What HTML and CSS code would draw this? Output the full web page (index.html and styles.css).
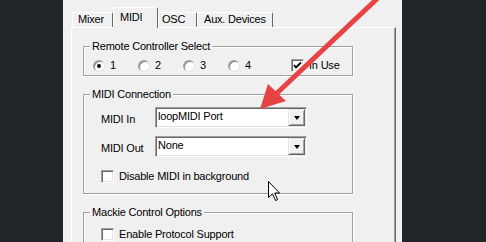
FILE: index.html
```html
<!DOCTYPE html>
<html lang="en">
<head>
    <meta charset="UTF-8">
    <meta name="viewport" content="width=device-width, initial-scale=1.0">
    <title>MIDI Settings</title>
    <link rel="stylesheet" href="styles.css">
</head>
<body>

    <div class="window">
        <div class="tabs">
            <div class="tab tab-mixer">Mixer</div>
            <div class="tab tab-active">MIDI</div>
            <div class="tab tab-osc">OSC</div>
            <div class="tab tab-aux">Aux. Devices</div>
        </div>

        <div class="panel">
            <fieldset class="group">
                <legend>Remote Controller Select</legend>
                <div class="group-body radio-row">
                    <label class="radio"><span class="circle checked"></span>1</label>
                    <label class="radio"><span class="circle"></span>2</label>
                    <label class="radio"><span class="circle"></span>3</label>
                    <label class="radio"><span class="circle"></span>4</label>
                    <label class="check in-use">
                        <span class="box">
                            <svg width="9" height="9" viewBox="0 0 9 9"><path d="M1 4 L3 6.5 L8 1.5" fill="none" stroke="#000" stroke-width="1.8"/></svg>
                        </span>In Use
                    </label>
                </div>
            </fieldset>

            <fieldset class="group group-midi">
                <legend>MIDI Connection</legend>
                <div class="group-body midi-body">
                    <div class="field">
                        <span class="field-label">MIDI In</span>
                        <div class="combo">
                            <span class="combo-text">loopMIDI Port</span>
                            <span class="combo-btn"><span class="tri"></span></span>
                        </div>
                    </div>
                    <div class="field">
                        <span class="field-label">MIDI Out</span>
                        <div class="combo">
                            <span class="combo-text">None</span>
                            <span class="combo-btn"><span class="tri"></span></span>
                        </div>
                    </div>
                    <label class="check check-bg"><span class="box"></span>Disable MIDI in background</label>
                </div>
            </fieldset>

            <fieldset class="group group-mackie">
                <legend>Mackie Control Options</legend>
                <div class="group-body mackie-body">
                    <label class="check"><span class="box"></span>Enable Protocol Support</label>
                </div>
            </fieldset>
        </div>
    </div>

    <!-- annotation over the screenshot -->
    <svg class="arrow" width="486" height="242" viewBox="0 0 486 242">
        <line x1="379" y1="-3" x2="276" y2="94" stroke="#e84343" stroke-width="5"/>
        <polygon points="260,109 286,101 268,84" fill="#e84343"/>
    </svg>

    <svg class="cursor" width="13" height="21" viewBox="0 0 13 21">
        <path d="M0.5 0.5 L0.5 16.5 L4.5 12.8 L7.5 19.5 L9.6 18.6 L6.7 12 L11.5 12 Z" fill="#fff" stroke="#000" stroke-width="1"/>
    </svg>

</body>
</html>
```

FILE: styles.css
```css
body {
    margin: 0;
    height: 242px;
    overflow: hidden;
    background-color: #212529;
    font-family: "Liberation Sans", Arial, sans-serif;
    font-size: 11px;
    line-height: 13px;
    letter-spacing: -0.2px;
    color: #000;
}
.window {
    margin-left: 63px;
    width: 339px;
    height: 242px;
    box-sizing: border-box;
    padding: 7px 0 0 8px;
    background-color: #f0f0f0;
    overflow: hidden;
}

/* tabs */
.tabs {
    display: flex;
    align-items: flex-end;
    height: 20px;
    padding-left: 1px;
}
.tab {
    box-sizing: border-box;
    height: 15px;
    border-top: 1px solid #fff;
    border-left: 1px solid #fff;
    border-right: 1px solid #696969;
    border-radius: 2px 2px 0 0;
    padding-left: 5px;
    white-space: nowrap;
}
.tab-mixer { width: 41px; }
.tab-osc { width: 39px; padding-left: 3px; }
.tab-aux { width: 76px; padding-left: 6px; }
.tab-active {
    position: relative;
    z-index: 1;
    width: 45px;
    height: 21px;
    margin-bottom: -1px;
    padding-top: 3px;
    padding-left: 6px;
    background-color: #f0f0f0;
}

/* panel */
.panel {
    width: 325px;
    height: 215px;
    box-sizing: border-box;
    border-top: 1px solid #fff;
    border-left: 1px solid #fff;
    border-right: 1px solid #696969;
    box-shadow: inset -1px 0 #a0a0a0;
    padding: 12px 0 0 11px;
    overflow: hidden;
}

/* group boxes */
.group {
    width: 270px;
    box-sizing: border-box;
    margin: 0 0 12px 0;
    padding: 0 0 0 6px;
    border: 1px solid #a0a0a0;
    box-shadow: inset 1px 1px #fff, 1px 1px #fff;
}
.group legend {
    padding: 0 2px;
    background-color: #f0f0f0;
}
.group-body {
    margin-left: -6px;
    padding: 6px 0 3px 9px;
}
.radio-row {
    display: flex;
    align-items: center;
    height: 13px;
}
.radio {
    display: flex;
    align-items: center;
    width: 45px;
}
.circle {
    width: 12px;
    height: 12px;
    box-sizing: border-box;
    margin-right: 5px;
    border-radius: 50%;
    border: 1px solid;
    border-color: #a0a0a0 #e3e3e3 #e3e3e3 #a0a0a0;
    box-shadow: inset 1px 1px 0 #808080;
    background-color: #fff;
    display: flex;
    align-items: center;
    justify-content: center;
}
.circle.checked::after {
    content: "";
    width: 4px;
    height: 4px;
    border-radius: 50%;
    background-color: #000;
}

/* checkboxes */
.check {
    display: flex;
    align-items: center;
    height: 13px;
}
.box {
    width: 13px;
    height: 13px;
    box-sizing: border-box;
    margin-right: 5px;
    border: 1px solid;
    border-color: #a0a0a0 #fff #fff #a0a0a0;
    box-shadow: inset 1px 1px 0 #696969, inset -1px -1px 0 #e3e3e3;
    background-color: #fff;
    display: flex;
    align-items: center;
    justify-content: center;
}
.in-use {
    margin-left: 18px;
}

/* midi connection */
.midi-body {
    padding: 6px 0 10px 17px;
}
.field {
    display: flex;
    align-items: center;
    margin-bottom: 8px;
}
.field-label {
    width: 54px;
    padding-top: 3px;
}
.combo {
    width: 152px;
    height: 21px;
    box-sizing: border-box;
    display: flex;
    border: 1px solid;
    border-color: #a0a0a0 #fff #fff #a0a0a0;
    box-shadow: inset 1px 1px 0 #696969, inset -1px -1px 0 #e3e3e3;
    background-color: #fff;
    padding: 1px;
}
.combo-text {
    flex: 1;
    padding-top: 1px;
    padding-left: 1px;
}
.combo-btn {
    width: 17px;
    box-sizing: border-box;
    border: 1px solid;
    border-color: #e3e3e3 #696969 #696969 #e3e3e3;
    box-shadow: inset 1px 1px 0 #fff, inset -1px -1px 0 #a0a0a0;
    background-color: #f0f0f0;
    display: flex;
    align-items: center;
    justify-content: center;
}
.tri {
    width: 0;
    height: 0;
    border-left: 3.5px solid transparent;
    border-right: 3.5px solid transparent;
    border-top: 4px solid #000;
}
.check-bg {
    margin-top: 13px;
}

/* mackie */
.mackie-body {
    padding: 9px 0 10px 17px;
}

/* overlays */
.arrow {
    position: absolute;
    left: 0;
    top: 0;
    pointer-events: none;
}
.cursor {
    position: absolute;
    left: 268px;
    top: 181px;
    pointer-events: none;
}
```
